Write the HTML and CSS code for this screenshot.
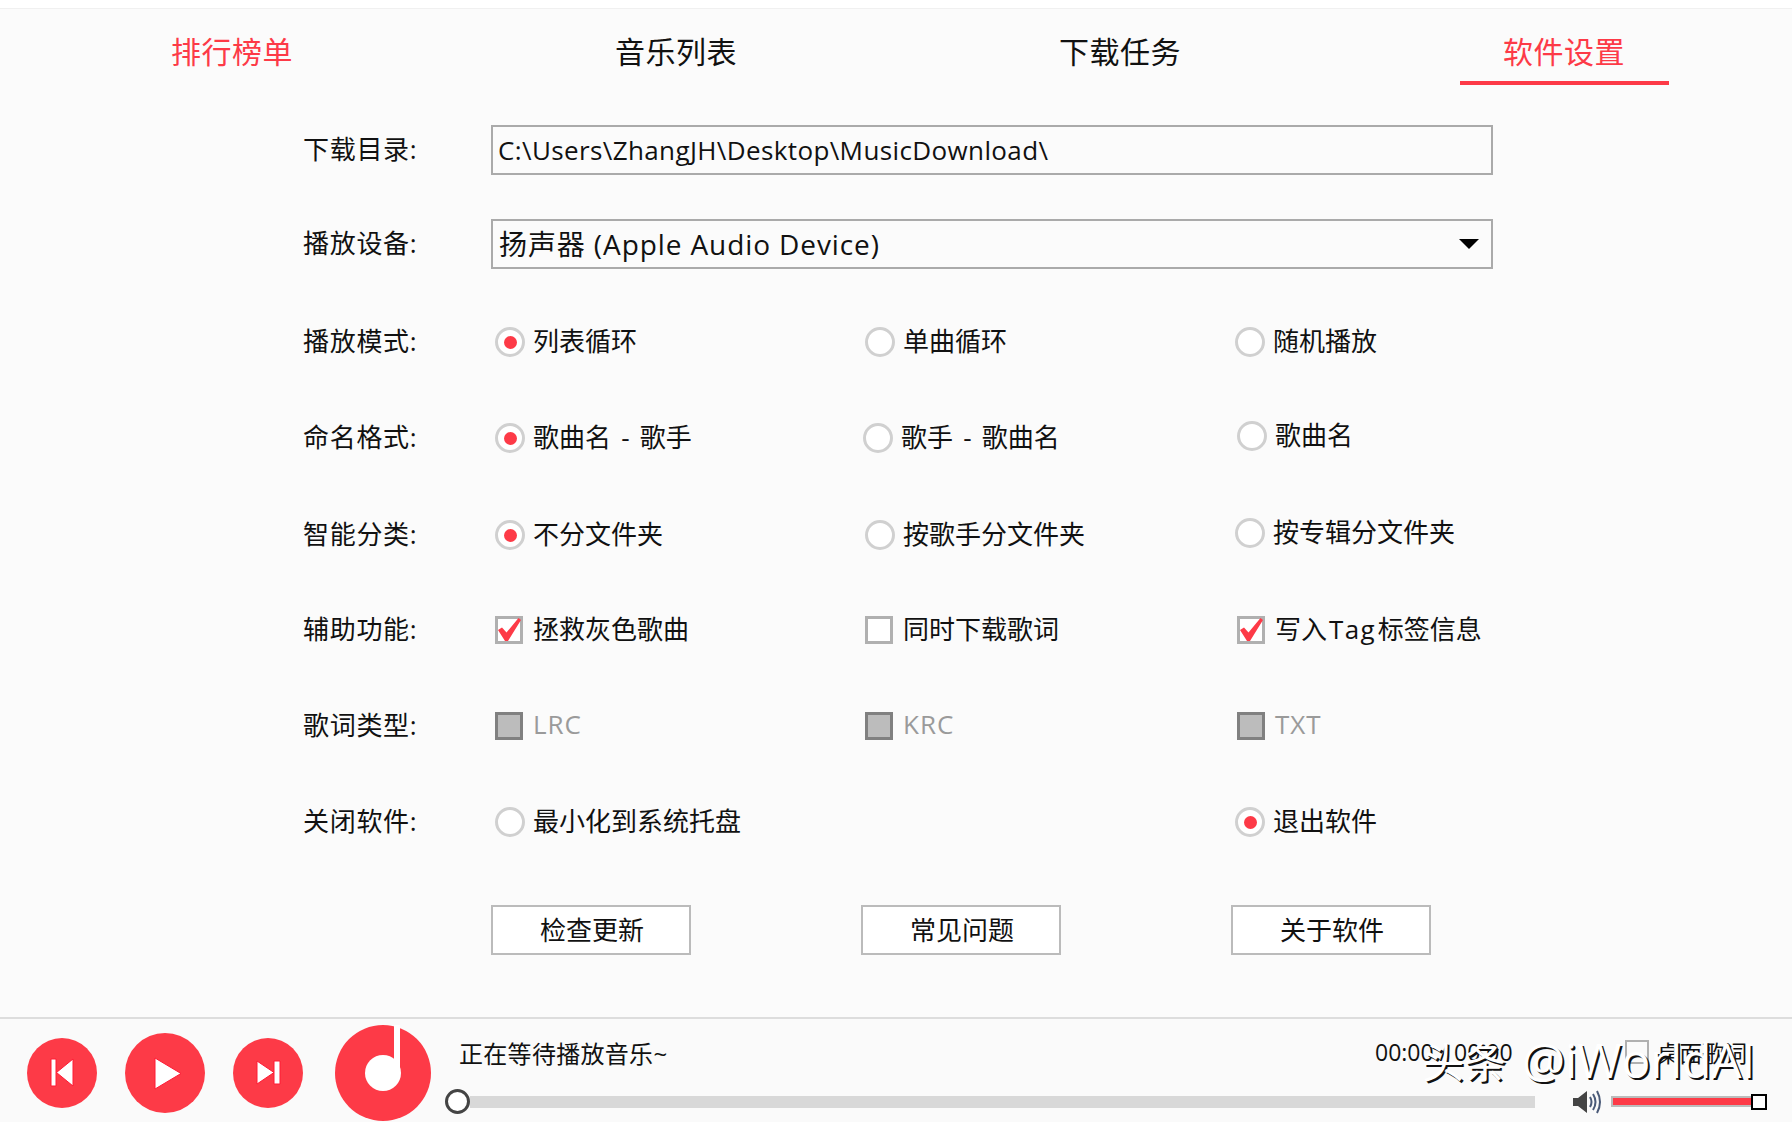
FILE: index.html
```html
<!DOCTYPE html>
<html lang="zh-CN">
<head>
    <meta charset="UTF-8">
    <title>音乐下载器</title>
    <link rel="stylesheet" href="styles.css">
</head>
<body>
    <nav class="tabs">
        <a class="tab tab-red" href="#">排行榜单</a>
        <a class="tab" href="#">音乐列表</a>
        <a class="tab" href="#">下载任务</a>
        <a class="tab tab-red tab-active" href="#">软件设置</a>
    </nav>

    <main class="settings">
        <div class="row">
            <div class="label">下载目录:</div>
            <div class="field">C:\Users\ZhangJH\Desktop\MusicDownload\</div>
        </div>
        <div class="row">
            <div class="label">播放设备:</div>
            <div class="field field-select">
                <span>扬声器 (Apple Audio Device)</span>
                <span class="arrow"></span>
            </div>
        </div>
        <div class="row">
            <div class="label">播放模式:</div>
            <div class="opt"><span class="radio radio-on"></span>列表循环</div>
            <div class="opt"><span class="radio"></span>单曲循环</div>
            <div class="opt"><span class="radio"></span>随机播放</div>
        </div>
        <div class="row">
            <div class="label">命名格式:</div>
            <div class="opt"><span class="radio radio-on"></span>歌曲名 - 歌手</div>
            <div class="opt opt-left"><span class="radio"></span>歌手 - 歌曲名</div>
            <div class="opt opt-right opt-up"><span class="radio"></span>歌曲名</div>
        </div>
        <div class="row">
            <div class="label">智能分类:</div>
            <div class="opt"><span class="radio radio-on"></span>不分文件夹</div>
            <div class="opt"><span class="radio"></span>按歌手分文件夹</div>
            <div class="opt opt-up"><span class="radio"></span>按专辑分文件夹</div>
        </div>
        <div class="row">
            <div class="label">辅助功能:</div>
            <div class="opt">
                <span class="check">
                    <svg viewBox="0 0 22 22" width="22" height="22"><path d="M0 11 L4 8.5 L8.5 13.5 L20.5 -1 L23 1 L10 22 L7 22 Z" fill="#fd3a47"/></svg>
                </span>拯救灰色歌曲
            </div>
            <div class="opt"><span class="check"></span>同时下载歌词</div>
            <div class="opt opt-right">
                <span class="check">
                    <svg viewBox="0 0 22 22" width="22" height="22"><path d="M0 11 L4 8.5 L8.5 13.5 L20.5 -1 L23 1 L10 22 L7 22 Z" fill="#fd3a47"/></svg>
                </span>
                <span>写入<span class="tag-word">Tag</span>标签信息</span>
            </div>
        </div>
        <div class="row">
            <div class="label">歌词类型:</div>
            <div class="opt opt-off"><span class="check check-off"></span>LRC</div>
            <div class="opt opt-off"><span class="check check-off"></span>KRC</div>
            <div class="opt opt-off opt-right"><span class="check check-off"></span>TXT</div>
        </div>
        <div class="row">
            <div class="label">关闭软件:</div>
            <div class="opt"><span class="radio"></span>最小化到系统托盘</div>
            <div></div>
            <div class="opt"><span class="radio radio-on"></span>退出软件</div>
        </div>
        <div class="row">
            <div></div>
            <div><a class="btn" href="#">检查更新</a></div>
            <div><a class="btn" href="#">常见问题</a></div>
            <div><a class="btn" href="#">关于软件</a></div>
        </div>
    </main>

    <footer class="player-bar">
        <div class="controls">
            <svg class="ctrl-small" viewBox="0 0 70 70">
                <circle cx="35" cy="35" r="35" fill="#fd3a47"/>
                <path d="M24 21H29V48H24Z M46 21V48L29.5 34.5Z" fill="#fff" stroke="#ff1a35" stroke-width="1"/>
            </svg>
            <svg class="ctrl-big" viewBox="0 0 80 80">
                <circle cx="40" cy="40" r="40" fill="#fd3a47"/>
                <path d="M30 25V56L56 40.5Z" fill="#fff" stroke="#ff1a35" stroke-width="1"/>
            </svg>
            <svg class="ctrl-small" viewBox="0 0 70 70">
                <circle cx="35" cy="35" r="35" fill="#fd3a47"/>
                <path d="M41 23H47V46H41Z M24 23V46L41 34.5Z" fill="#fff" stroke="#ff1a35" stroke-width="1"/>
            </svg>
            <svg class="logo" viewBox="0 0 96 96">
                <circle cx="48" cy="48" r="48" fill="#fd3a47"/>
                <circle cx="48" cy="48" r="18" fill="#fff"/>
                <rect x="59" y="0" width="6" height="48" fill="#fff"/>
            </svg>
        </div>

        <div class="player">
            <div class="player-top">
                <div class="song">正在等待播放音乐~</div>
                <div class="time">00:00 / 00:00</div>
                <span class="lyric-box"></span>
                <div class="lyric-text">桌面歌词</div>
            </div>
            <div class="player-bottom">
                <span class="knob"></span>
                <div class="track"></div>
                <svg class="volume-icon" viewBox="0 0 30 26">
                    <path d="M0 9H5L14 2V24L5 17H0Z" fill="#444"/>
                    <path d="M17 8Q20 13 17 18M20 5Q25 13 20 21M24 2Q30 13 24 24" fill="none" stroke="#4a5a78" stroke-width="2"/>
                </svg>
                <div class="volume">
                    <div class="volume-fill"></div>
                    <span class="volume-knob"></span>
                </div>
            </div>
        </div>
    </footer>

    <div class="watermark">头条 <span class="watermark-name">@iWorldAI</span></div>
</body>
</html>
```

FILE: styles.css
```css
*,::after,::before{
    padding: 0;
    margin: 0;
    box-sizing: border-box;
}

body{
    position: relative;
    height: 1122px;
    overflow: hidden;
    background-color: #fbfbfb;
    color: #111;
    font-family: "Open Sans", "Noto Sans CJK SC", sans-serif;
    font-size: 26px;
    display: flex;
    flex-direction: column;
}

a{
    text-decoration: none;
    color: inherit;
}

/* tabs */
.tabs{
    display: flex;
    height: 118px;
    padding: 0 6px 0 10px;
    background-color: #fbfbfb;
    border-top: 8px solid #fff;
    box-shadow: inset 0 1px 0 #f0f0f0;
}

.tab{
    flex: 1;
    height: 77px;
    display: flex;
    justify-content: center;
    align-items: center;
    padding-top: 6px;
    font-size: 30px;
    letter-spacing: 0.5px;
    position: relative;
}

.tab-red{
    color: #fd3a47;
}

.tab-active::after{
    content: "";
    position: absolute;
    left: 118px;
    bottom: 0;
    width: 209px;
    height: 4px;
    background-color: #fd3a47;
}

/* settings form */
.settings{
    flex: 1;
    padding: 7px 0 0 303px;
}

.row{
    display: grid;
    grid-template-columns: 188px 370px 370px 370px;
    align-items: center;
    height: 50px;
    margin-bottom: 46px;
}

.row:nth-child(1){
    margin-bottom: 44px;
}

.row:nth-child(2){
    margin-bottom: 48px;
}

.row:nth-child(4){
    margin-bottom: 47px;
}

.row:nth-child(5){
    margin-bottom: 45px;
}

.row:nth-child(8){
    margin-bottom: 58px;
}

.label{
    white-space: nowrap;
    padding-bottom: 4px;
    letter-spacing: 0.7px;
}

.field{
    grid-column: 2 / 5;
    width: 1002px;
    height: 50px;
    border: 2px solid #aaa;
    padding-left: 5px;
    line-height: 46px;
    font-size: 26px;
    letter-spacing: 0.38px;
    white-space: nowrap;
}

.field-select{
    display: flex;
    justify-content: space-between;
    align-items: center;
    padding-right: 12px;
    padding-left: 6px;
    font-size: 28px;
    letter-spacing: 0.9px;
}

.arrow{
    width: 0;
    height: 0;
    border-left: 10px solid transparent;
    border-right: 10px solid transparent;
    border-top: 10px solid #000;
}

.opt{
    display: flex;
    align-items: center;
    padding-left: 4px;
    padding-bottom: 4px;
    word-spacing: 3.5px;
    white-space: nowrap;
}

.opt-left{
    padding-left: 2px;
}

.opt-right{
    padding-left: 6px;
}

.opt-up{
    margin-top: -4px;
}

.opt-off{
    color: #9a9a9a;
    letter-spacing: 1px;
}

.tag-word{
    padding: 0 2px;
    letter-spacing: 1.3px;
}

.radio{
    flex: none;
    width: 30px;
    height: 30px;
    margin: 4px 8px 0 0;
    border: 3px solid #d0d0d0;
    border-radius: 50%;
    background-color: #fff;
    display: flex;
    justify-content: center;
    align-items: center;
}

.radio-on::after{
    content: "";
    width: 13px;
    height: 13px;
    border-radius: 50%;
    background-color: #fd3a47;
}

.check{
    flex: none;
    width: 28px;
    height: 28px;
    margin: 4px 10px 0 0;
    border: 3px solid #b0b0b0;
    background-color: #fff;
    display: flex;
}

.check svg{
    overflow: visible;
}

.check-off{
    border-color: #808080;
    background-color: #bcbcbc;
}

.btn{
    display: flex;
    justify-content: center;
    align-items: center;
    width: 200px;
    height: 50px;
    padding: 0 0 3px 2px;
    border: 2px solid #bbb;
    background-color: #fff;
}

/* player bar */
.player-bar{
    height: 105px;
    border-top: 2px solid #ddd;
    background-color: #fafafa;
    display: flex;
    padding-left: 27px;
}

.controls{
    display: flex;
    align-items: center;
    padding-top: 5px;
}

.ctrl-small{
    width: 70px;
    height: 70px;
}

.ctrl-big{
    width: 80px;
    height: 80px;
    margin: 0 28px;
}

.logo{
    width: 96px;
    height: 96px;
    margin-left: 32px;
}

.player{
    width: 1322px;
    margin-left: 14px;
    padding-top: 18px;
}

.player-top{
    display: flex;
    align-items: center;
    height: 30px;
    padding-left: 14px;
}

.song{
    width: 916px;
    font-size: 24px;
    letter-spacing: 0.3px;
}

.time{
    width: 250px;
    font-size: 23px;
}

.lyric-box{
    width: 24px;
    height: 24px;
    margin-right: 8px;
    border: 2px solid #b0b0b0;
}

.lyric-text{
    font-size: 22.5px;
}

.player-bottom{
    display: flex;
    align-items: center;
    height: 25px;
    margin-top: 22px;
}

.knob{
    flex: none;
    width: 25px;
    height: 25px;
    border: 3px solid #444;
    border-radius: 50%;
    background-color: #fff;
}

.track{
    width: 1065px;
    height: 12px;
    background-color: #d8d8d8;
}

.volume-icon{
    width: 30px;
    height: 26px;
    margin-left: 38px;
    margin-right: 8px;
}

.volume{
    width: 156px;
    height: 11px;
    position: relative;
    border: 2px solid #bbb;
    background-color: #bbb;
}

.volume-fill{
    width: 100%;
    height: 100%;
    background-color: #fd3a47;
}

.volume-knob{
    position: absolute;
    right: -2px;
    top: -4px;
    width: 16px;
    height: 16px;
    border: 2px solid #000;
    background-color: #fff;
}

/* site watermark, sits over the player bar */
.watermark{
    position: absolute;
    left: 1422px;
    top: 1030px;
    font-size: 42px;
    line-height: 60px;
    color: #fff;
    text-shadow: 2px 2px 0 #111;
    white-space: nowrap;
}

.watermark-name{
    font-size: 48px;
    margin-left: 5px;
}
```
